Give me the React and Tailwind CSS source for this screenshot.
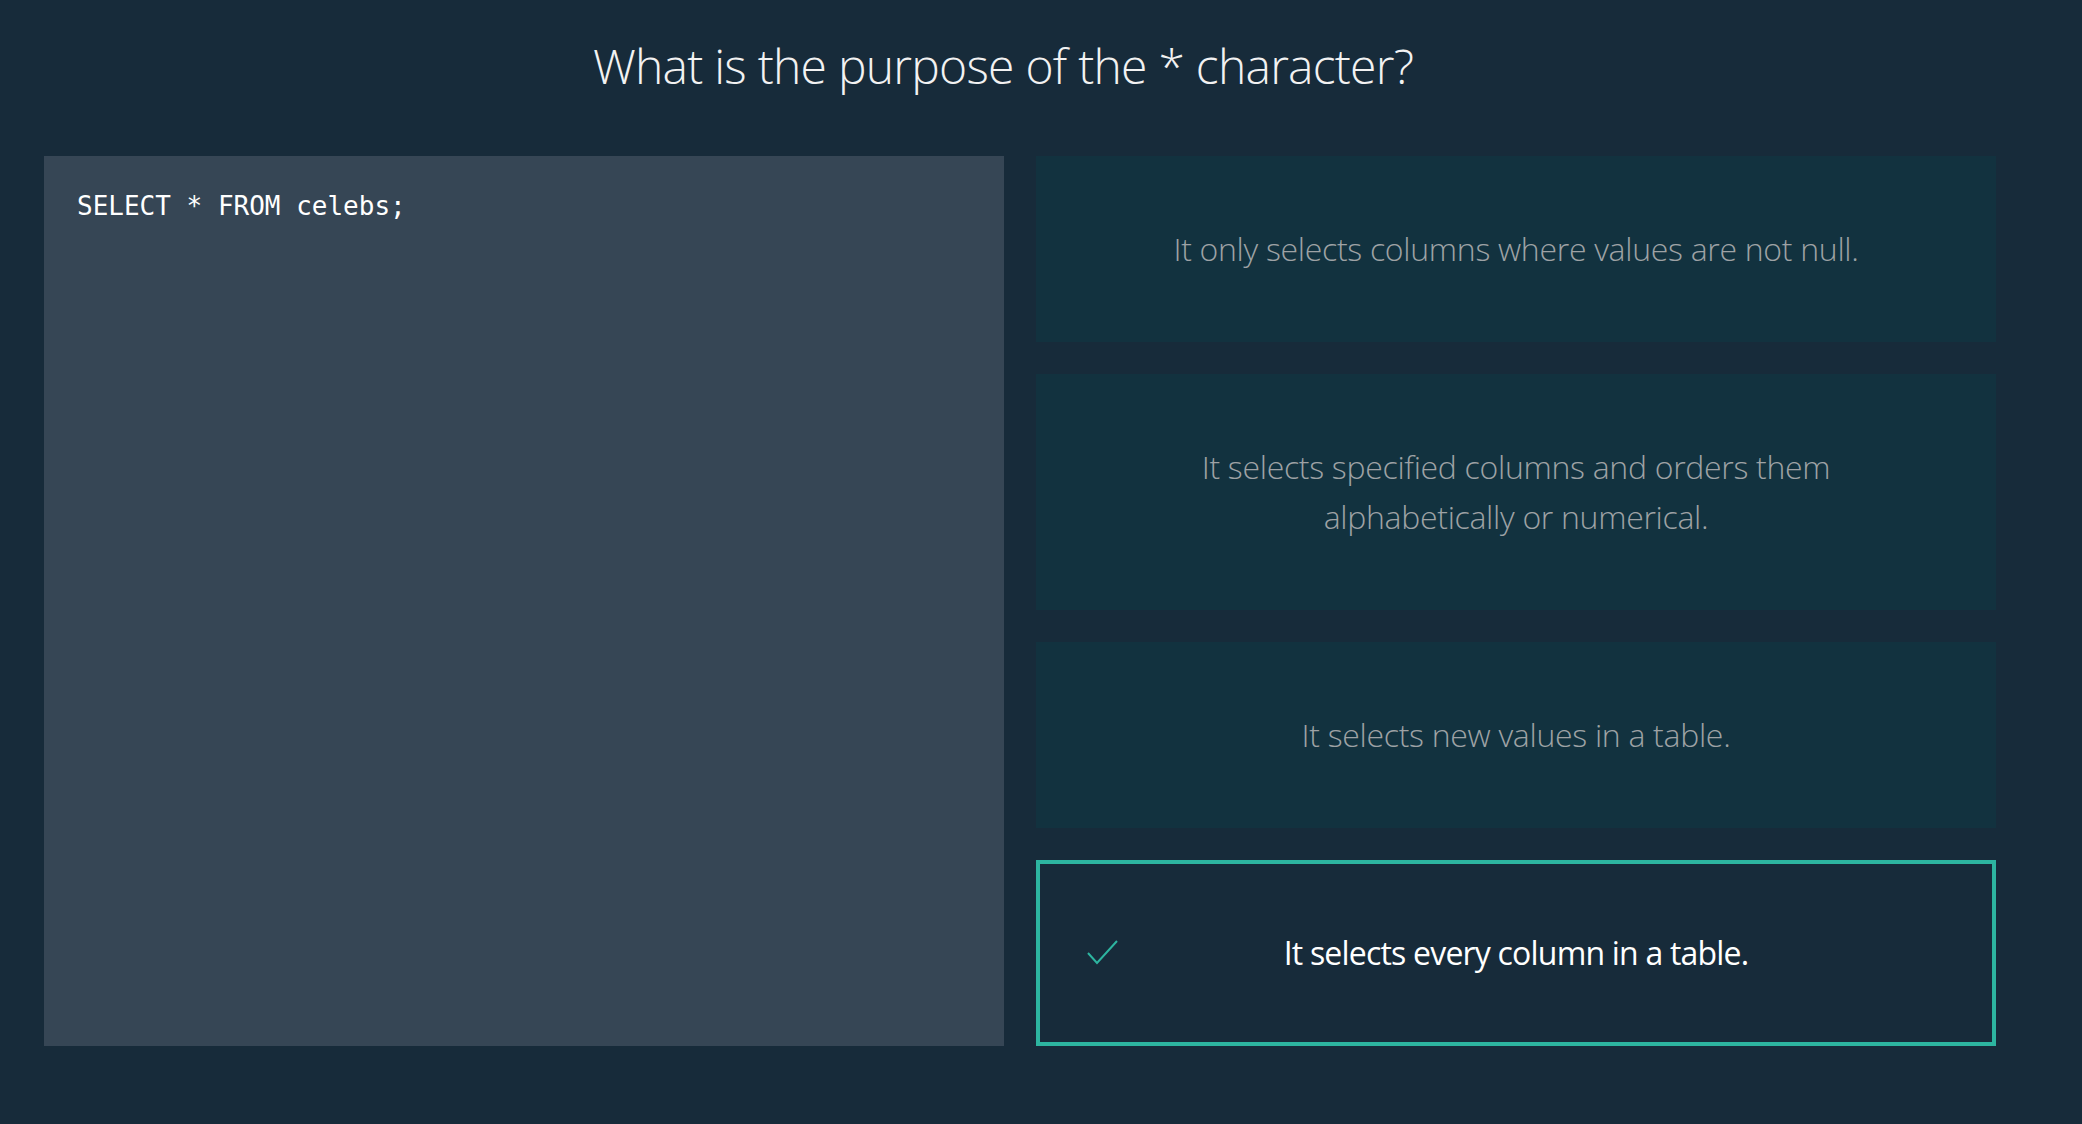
import { useState } from "react";

const answers = [
  "It only selects columns where values are not null.",
  "It selects specified columns and orders them alphabetically or numerical.",
  "It selects new values in a table.",
  "It selects every column in a table.",
];

function CheckIcon() {
  return (
    <svg width="36" height="28" viewBox="0 0 36 28" fill="none" className="absolute left-[44px] top-1/2 -translate-y-1/2">
      <path d="M4 14 L13 24 L33 2" stroke="#2db5a0" strokeWidth="2" />
    </svg>
  );
}

function Answer({ text, correct }) {
  // the correct one gets the teal frame and check mark
  if (correct) {
    return (
      <div className="relative border-[4px] border-[#2db5a0] bg-[#172b3a] py-[64px] px-[120px] text-center text-[32px] leading-[50px] tracking-[-0.8px] text-white">
        <CheckIcon />
        {text}
      </div>
    );
  }
  return (
    <div className="bg-[#12323f] py-[68px] px-[120px] text-center text-[32px] leading-[50px] tracking-[-0.3px] font-light text-[#9ea2a5]">
      {text}
    </div>
  );
}

export default function App() {
  const [picked] = useState(3);

  return (
    <div className="min-h-screen w-full bg-[#172b3a] font-['Open_Sans',sans-serif]">
      <h1 className="pt-[42px] pr-[76px] text-center text-[48px] leading-none font-light tracking-[-0.75px] text-[#f2f2f2]">
        What is the purpose of the * character?
      </h1>

      <div className="mt-[66px] ml-[44px] mr-[86px] flex gap-[32px]">
        <div className="w-[960px] shrink-0 bg-[#364655] pl-[33px] pt-[30px]">
          <pre className="font-['DejaVu_Sans_Mono',monospace] text-[26px] leading-[40px] text-white">
            SELECT * FROM celebs;
          </pre>
        </div>

        <div className="flex flex-1 flex-col gap-[32px]">
          {answers.map((a, i) => (
            <Answer key={i} text={a} correct={i === picked} />
          ))}
        </div>
      </div>
    </div>
  );
}
